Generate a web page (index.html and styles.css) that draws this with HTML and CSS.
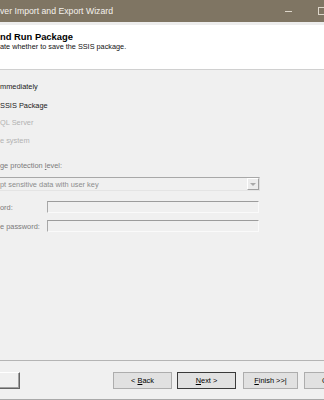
FILE: index.html
```html
<!DOCTYPE html>
<html>
<head>
    <meta charset="UTF-8">
    <title>SQL Server Import and Export Wizard</title>
    <link rel="stylesheet" href="styles.css">
</head>
<body>
    <div class="window">
        <div class="titlebar">
            <span class="title">ver Import and Export Wizard</span>
            <div class="controls">
                <span class="ctl-min"></span>
                <span class="ctl-max"></span>
            </div>
        </div>
        <div class="strip"></div>

        <div class="header">
            <div class="page-title">nd Run Package</div>
            <div class="page-sub">ate whether to save the SSIS package.</div>
        </div>

        <div class="content">
            <div class="opt first">mmediately</div>
            <div class="opt gap9">SSIS Package</div>
            <div class="opt gap7 disabled">QL Server</div>
            <div class="opt gap8 disabled">e system</div>

            <div class="opt gap15 muted">ge protection <u>l</u>evel:</div>
            <div class="combo">
                <span class="combo-text">pt sensitive data with user key</span>
                <span class="combo-arrow"><span class="tri"></span></span>
            </div>

            <div class="field-row gap10">
                <span class="muted">ord:</span>
                <span class="textbox"></span>
            </div>
            <div class="field-row gap7">
                <span class="muted">e password:</span>
                <span class="textbox"></span>
            </div>
        </div>

        <div class="footer">
            <div class="buttons">
                <button class="btn help"></button>
                <button class="btn back">&lt; <u>B</u>ack</button>
                <button class="btn next"><u>N</u>ext &gt;</button>
                <button class="btn finish"><u>F</u>inish &gt;&gt;|</button>
                <button class="btn cancel">Cancel</button>
            </div>
        </div>
    </div>
</body>
</html>
```

FILE: styles.css
```css
body {
    margin: 0;
    width: 324px;
    height: 400px;
    overflow: hidden;
    background: #f0f0f0;
    font-family: "Liberation Sans", Arial, sans-serif;
}

.window {
    display: flex;
    flex-direction: column;
    height: 400px;
    box-sizing: border-box;
    border-bottom: 1px solid #a9a9a9;
}

.titlebar {
    display: flex;
    align-items: center;
    height: 22px;
    background: #7f7563;
    color: #f4f1ec;
    font-size: 8.7px;
    overflow: hidden;
}

.controls {
    display: flex;
    align-items: center;
    gap: 26px;
    margin-left: auto;
    margin-right: -4px;
}

.ctl-min {
    width: 7px;
    height: 1px;
    background: #ddd6ca;
}

.ctl-max {
    width: 8px;
    height: 6px;
    border: 1px solid #ddd6ca;
}

.strip {
    height: 3px;
    background: #ededed;
}

.header {
    height: 45px;
    box-sizing: border-box;
    padding-top: 6px;
    background: #fff;
    border-bottom: 1px solid #d0d0d0;
}

.page-title {
    font-size: 9.4px;
    font-weight: bold;
    line-height: 11px;
    color: #000;
}

.page-sub {
    font-size: 7.3px;
    line-height: 10px;
    color: #111;
}

.content {
    display: flex;
    flex-direction: column;
    font-size: 7.4px;
    color: #1a1a1a;
}

.opt {
    line-height: 10px;
}

.first { margin-top: 12px; }
.gap7 { margin-top: 7px; }
.gap8 { margin-top: 8px; }
.gap9 { margin-top: 9px; }
.gap10 { margin-top: 10px; }
.gap15 { margin-top: 15px; }

.disabled {
    color: #b2b2b2;
}

.muted {
    color: #7a7a7a;
}

.combo {
    display: flex;
    align-items: center;
    width: 260px;
    height: 14px;
    margin-top: 6px;
    box-sizing: border-box;
    border-top: 1px solid #a8a8a8;
    border-right: 1px solid #dcdcdc;
    border-bottom: 1px solid #e4e4e4;
    background: #f0f0f0;
    color: #8c8c8c;
}

.combo-text {
    flex-grow: 1;
}

.combo-arrow {
    display: flex;
    align-items: center;
    justify-content: center;
    width: 12px;
    height: 12px;
    box-sizing: border-box;
    border: 1px solid #fff;
    border-right-color: #a0a0a0;
    border-bottom-color: #a0a0a0;
    background: #ececec;
}

.tri {
    width: 0;
    height: 0;
    border-left: 3px solid transparent;
    border-right: 3px solid transparent;
    border-top: 3px solid #a8a8a8;
}

.field-row {
    display: flex;
    align-items: center;
    height: 12px;
}

.textbox {
    width: 212px;
    height: 12px;
    margin-left: auto;
    margin-right: 65px;
    box-sizing: border-box;
    border-top: 1px solid #9c9c9c;
    border-left: 1px solid #a8a8a8;
    border-right: 1px solid #fafafa;
    border-bottom: 1px solid #fafafa;
    background: #f0f0f0;
}

.footer {
    margin-top: auto;
    height: 39px;
    box-sizing: border-box;
    padding-top: 11px;
    border-top: 1px solid #b4b4b4;
}

.buttons {
    display: flex;
}

.btn {
    flex-shrink: 0;
    height: 17px;
    padding: 0;
    box-sizing: border-box;
    font-family: "Liberation Sans", Arial, sans-serif;
    font-size: 7.4px;
    color: #000;
    background: #e1e1e1;
    border: 1px solid #adadad;
    text-align: center;
}

.btn.help {
    width: 22px;
    margin-left: -2px;
    background: #f0f0f0;
    border-color: #fff #646464 #646464 #fff;
    box-shadow: inset -1px -1px #a0a0a0;
}

.btn.back {
    width: 59px;
    margin-left: 93px;
}

.btn.next {
    width: 59px;
    margin-left: 5px;
    border-color: #3a3a3a;
}

.btn.finish {
    width: 55px;
    margin-left: 7px;
}

.btn.cancel {
    width: 59px;
    margin-left: 6px;
}
```
